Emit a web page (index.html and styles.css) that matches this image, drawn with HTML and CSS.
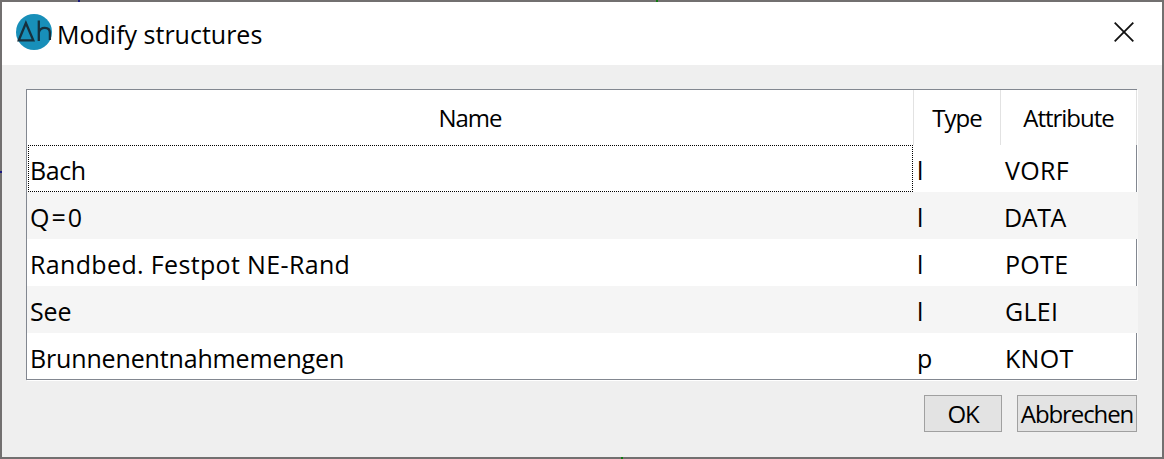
FILE: index.html
```
<!DOCTYPE html>
<html lang="en">
<head>
    <meta charset="UTF-8">
    <meta name="viewport" content="width=device-width, initial-scale=1.0">
    <title>Modify structures</title>
    <link rel="stylesheet" href="styles.css">
</head>
<body>
    <div class="dialog">
        <span class="mark mark-top-blue"></span>
        <span class="mark mark-top-green"></span>
        <span class="mark mark-left-blue"></span>
        <span class="mark mark-bottom-green"></span>

        <div class="titlebar">
            <svg class="logo" width="36" height="36" viewBox="0 0 36 36">
                <circle cx="18" cy="18" r="18" fill="#188fb9"/>
                <path d="M2.8 26.3 L9.9 9 L17.3 26.3 Z" fill="none" stroke="#17303d" stroke-width="2.3"/>
                <path d="M22.8 6.5 V27 M22.8 18.5 C23.5 15.5 26 13.8 28.8 13.8 C32.5 13.8 33.9 16 33.9 19 V26" fill="none" stroke="#17303d" stroke-width="2.3"/>
            </svg>
            <span class="title">Modify structures</span>
            <svg class="close" width="20" height="20" viewBox="0 0 20 20">
                <path d="M0.7 0.7 L19.3 19.3 M19.3 0.7 L0.7 19.3" stroke="#111" stroke-width="1.8"/>
            </svg>
        </div>

        <div class="content">
            <div class="table">
                <div class="row header">
                    <div class="cell head-name">Name</div>
                    <div class="cell head-type">Type</div>
                    <div class="cell head-attribute">Attribute</div>
                </div>
                <div class="row">
                    <div class="cell focused">Bach</div>
                    <div class="cell">l</div>
                    <div class="cell attribute">VORF</div>
                </div>
                <div class="row striped">
                    <div class="cell wide">Q=0</div>
                    <div class="cell">l</div>
                    <div class="cell tight">DATA</div>
                </div>
                <div class="row">
                    <div class="cell loose">Randbed. Festpot NE-Rand</div>
                    <div class="cell">l</div>
                    <div class="cell attribute">POTE</div>
                </div>
                <div class="row striped">
                    <div class="cell">See</div>
                    <div class="cell">l</div>
                    <div class="cell attribute">GLEI</div>
                </div>
                <div class="row last">
                    <div class="cell">Brunnenentnahmemengen</div>
                    <div class="cell">p</div>
                    <div class="cell attribute">KNOT</div>
                </div>
            </div>
            <div class="buttons">
                <button class="ok">OK</button>
                <button class="cancel">Abbrechen</button>
            </div>
        </div>
    </div>
</body>
</html>
```
FILE: styles.css
```
body {
    margin: 0;
    font-family: "Open Sans", "Noto Sans", sans-serif;
    font-size: 25px;
    color: #000;
}
.dialog {
    position: relative;
    box-sizing: border-box;
    width: 1164px;
    height: 459px;
    border: 2px solid #727070;
    background-color: #efefef;
}
/* bits of the drawing behind the window */
.mark {
    position: absolute;
    width: 2px;
    height: 2px;
}
.mark-top-blue {
    left: 76px;
    top: -2px;
    background-color: #1a1a80;
}
.mark-top-green {
    left: 654px;
    top: -2px;
    background-color: #107a10;
}
.mark-left-blue {
    left: -2px;
    top: 169px;
    background-color: #1a1a80;
}
.mark-bottom-green {
    left: 619px;
    bottom: -2px;
    background-color: #107a10;
}
.titlebar {
    display: flex;
    box-sizing: border-box;
    height: 63px;
    padding: 12px 28px 0 14px;
    background-color: #fff;
}
.title {
    margin-left: 5px;
    line-height: 40px;
}
.close {
    margin: 8px 0 0 auto;
}
.content {
    padding: 24px 24px 0;
}
.table {
    box-sizing: border-box;
    width: 1111px;
    height: 291px;
    border: 1px solid #828790;
    background-color: #fff;
    box-shadow: 1px 1px 0 #fff;
}
.row {
    display: grid;
    grid-template-columns: 887px 87px 135px;
    grid-template-rows: 100%;
    height: 47px;
    line-height: 50px;
}
.row.last {
    height: 46px;
}
.header {
    width: 1110px;
    height: 55px;
    line-height: 56px;
    font-size: 24px;
    text-align: center;
    background-color: #fff;
}
.striped {
    width: 1111px;
    background-color: #f5f5f5;
}
.cell {
    box-sizing: border-box;
    padding-left: 3px;
    white-space: nowrap;
    letter-spacing: -0.15px;
}
.cell.attribute {
    padding-left: 4px;
    letter-spacing: 0.3px;
}
.cell.tight {
    letter-spacing: -0.4px;
}
.cell.loose {
    letter-spacing: 0.35px;
}
.cell.wide {
    letter-spacing: 2px;
}
.header .cell {
    padding: 0;
    border-right: 1px solid #e2e2e2;
    letter-spacing: -1px;
}
.header .head-attribute {
    width: 136px;
}
.cell.focused {
    margin-left: 1px;
    margin-right: 1px;
    padding-left: 1px;
    border: 1px dotted #000;
    line-height: 48px;
    letter-spacing: -0.4px;
}
.buttons {
    display: flex;
    justify-content: flex-end;
    gap: 15px;
    margin-top: 15px;
    padding-right: 1px;
}
button {
    box-sizing: border-box;
    height: 37px;
    padding: 0;
    border: 1px solid #a0a0a0;
    background-color: #e3e3e3;
    font-family: inherit;
    font-size: 24px;
    line-height: 35px;
    color: #000;
    white-space: nowrap;
    letter-spacing: -1.1px;
}
.ok {
    width: 78px;
}
.cancel {
    width: 120px;
}
```
